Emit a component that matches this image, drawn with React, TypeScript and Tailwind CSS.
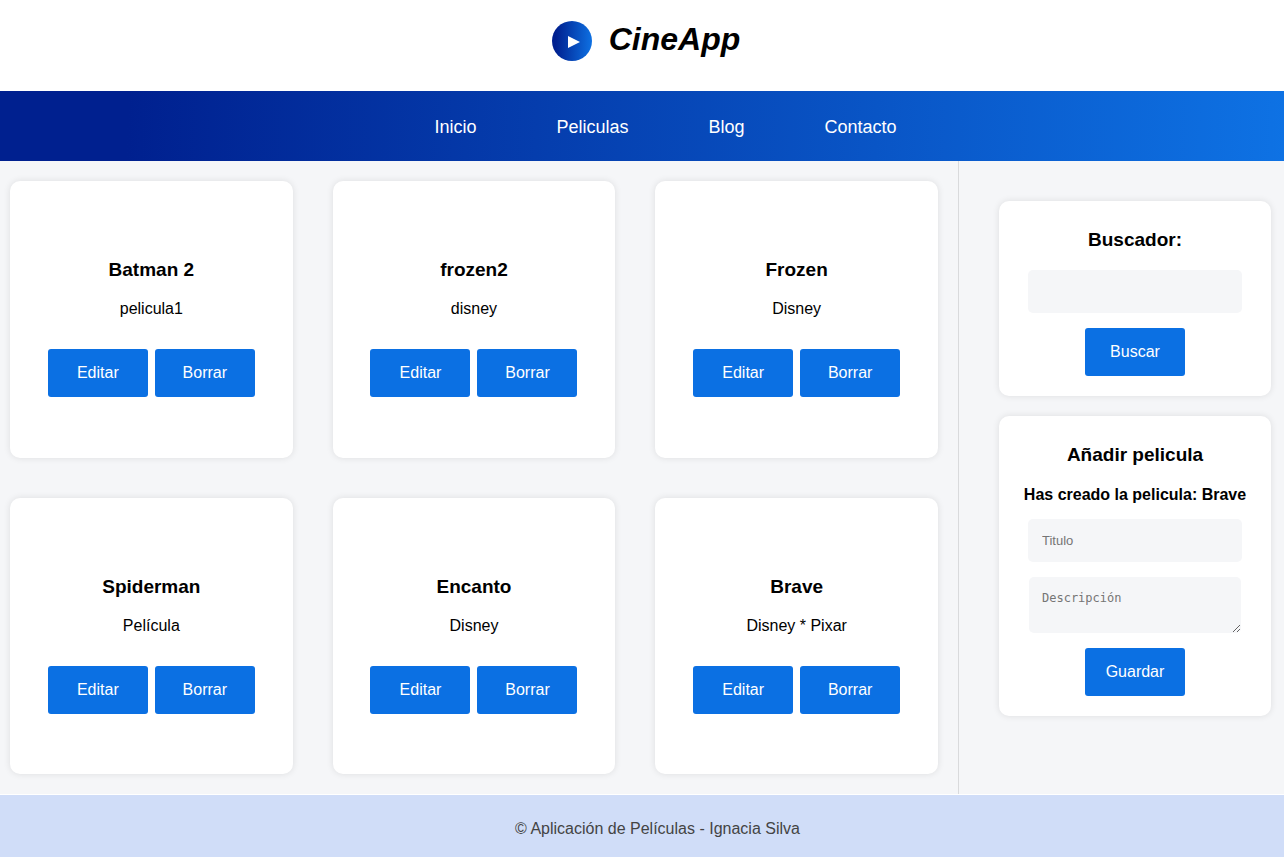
import React from "react";

const movies = [
  { title: "Batman 2", description: "pelicula1" },
  { title: "frozen2", description: "disney" },
  { title: "Frozen", description: "Disney" },
  { title: "Spiderman", description: "Película" },
  { title: "Encanto", description: "Disney" },
  { title: "Brave", description: "Disney * Pixar" },
];

const links = ["Inicio", "Peliculas", "Blog", "Contacto"];

function Button({ children, type = "button" }: { children: React.ReactNode; type?: "button" | "submit" }) {
  return (
    <button type={type} className="h-12 w-[100px] cursor-pointer rounded-[3px] bg-[#0b70e3] text-base text-white">
      {children}
    </button>
  );
}

function MovieCard({ title, description }: { title: string; description: string }) {
  return (
    <article className="flex flex-col items-center rounded-[10px] bg-white px-5 pt-[78px] pb-[60px] text-center shadow-[0_0_7px_rgba(0,0,0,0.1)]">
      <h3 className="text-[19px] leading-[21px] font-bold">{title}</h3>
      <p className="mt-5 text-base leading-[18px]">{description}</p>
      <div className="mt-[31px] flex gap-[7px]">
        <Button>Editar</Button>
        <Button>Borrar</Button>
      </div>
    </article>
  );
}

function Panel({ title, children }: { title: string; children: React.ReactNode }) {
  return (
    <section className="rounded-[10px] bg-white px-5 pt-7 pb-5 text-center shadow-[0_0_7px_rgba(0,0,0,0.1)]">
      <h3 className="text-[19px] leading-[21px] font-bold">{title}</h3>
      {children}
    </section>
  );
}

export default function App() {
  return (
    <div className="flex min-h-screen flex-col bg-white font-['Liberation_Sans',Arial,sans-serif] text-black">
      <header className="flex h-[91px] items-start justify-center gap-[17px] pt-[21px] pl-2">
        <div className="flex size-10 items-center justify-center rounded-full bg-[linear-gradient(92deg,#00208f_10%,#0e72e4_100%)]">
          <svg viewBox="0 0 40 40" className="size-10" aria-hidden="true">
            <path d="M16 15 L28 21 L16 27 Z" fill="#fff" />
          </svg>
        </div>
        <h1 className="text-[32px] leading-9 font-bold italic">CineApp</h1>
      </header>

      <nav className="flex h-[70px] items-center justify-center bg-[linear-gradient(92deg,#00208f_10%,#0e72e4_100%)] pt-1 pl-[47px]">
        <ul className="flex gap-20">
          {links.map((link) => (
            <li key={link}>
              <a href="#" className="text-lg leading-5 text-white">{link}</a>
            </li>
          ))}
        </ul>
      </nav>

      <div className="flex flex-1 bg-[#f5f6f8]">
        <main className="grid flex-1 grid-cols-3 gap-10 py-5 pr-5 pl-2.5">
          {movies.map((movie) => (
            <MovieCard key={movie.title} title={movie.title} description={movie.description} />
          ))}
        </main>

        <aside className="flex w-[326px] flex-col gap-5 border-l border-[#d9dadc] pt-10 pr-[13px] pb-10 pl-10">
          <Panel title="Buscador:">
            <form className="mt-5 flex flex-col items-center gap-[15px]">
              <input type="text" aria-label="Buscador" className="h-[43px] w-[214px] rounded-[5px] bg-[#f5f6f8] px-3.5 text-[13px]" />
              <Button>Buscar</Button>
            </form>
          </Panel>

          <Panel title="Añadir pelicula">
            <strong className="mt-[21px] block text-base leading-[18px] whitespace-nowrap">Has creado la pelicula: Brave</strong>
            <form className="mt-[15px] flex flex-col items-center gap-[15px]">
              <input
                type="text"
                aria-label="Titulo"
                placeholder="Titulo"
                className="h-[43px] w-[214px] rounded-[5px] bg-[#f5f6f8] px-3.5 text-[13px] placeholder:text-[#757575]"
              />
              <textarea
                aria-label="Descripción"
                placeholder="Descripción"
                className="h-14 w-[212px] rounded-[5px] bg-[#f5f6f8] px-[13px] py-3.5 font-['DejaVu_Sans_Mono',monospace] text-[12px] leading-[15px] placeholder:text-[#757575]"
              />
              <Button>Guardar</Button>
            </form>
          </Panel>
        </aside>
      </div>

      <footer className="mt-px flex h-[62px] items-center justify-center bg-[#d0ddf8] pt-1.5 pl-[31px] text-base text-[#444]">
        <p>© Aplicación de Películas - Ignacia Silva</p>
      </footer>
    </div>
  );
}
